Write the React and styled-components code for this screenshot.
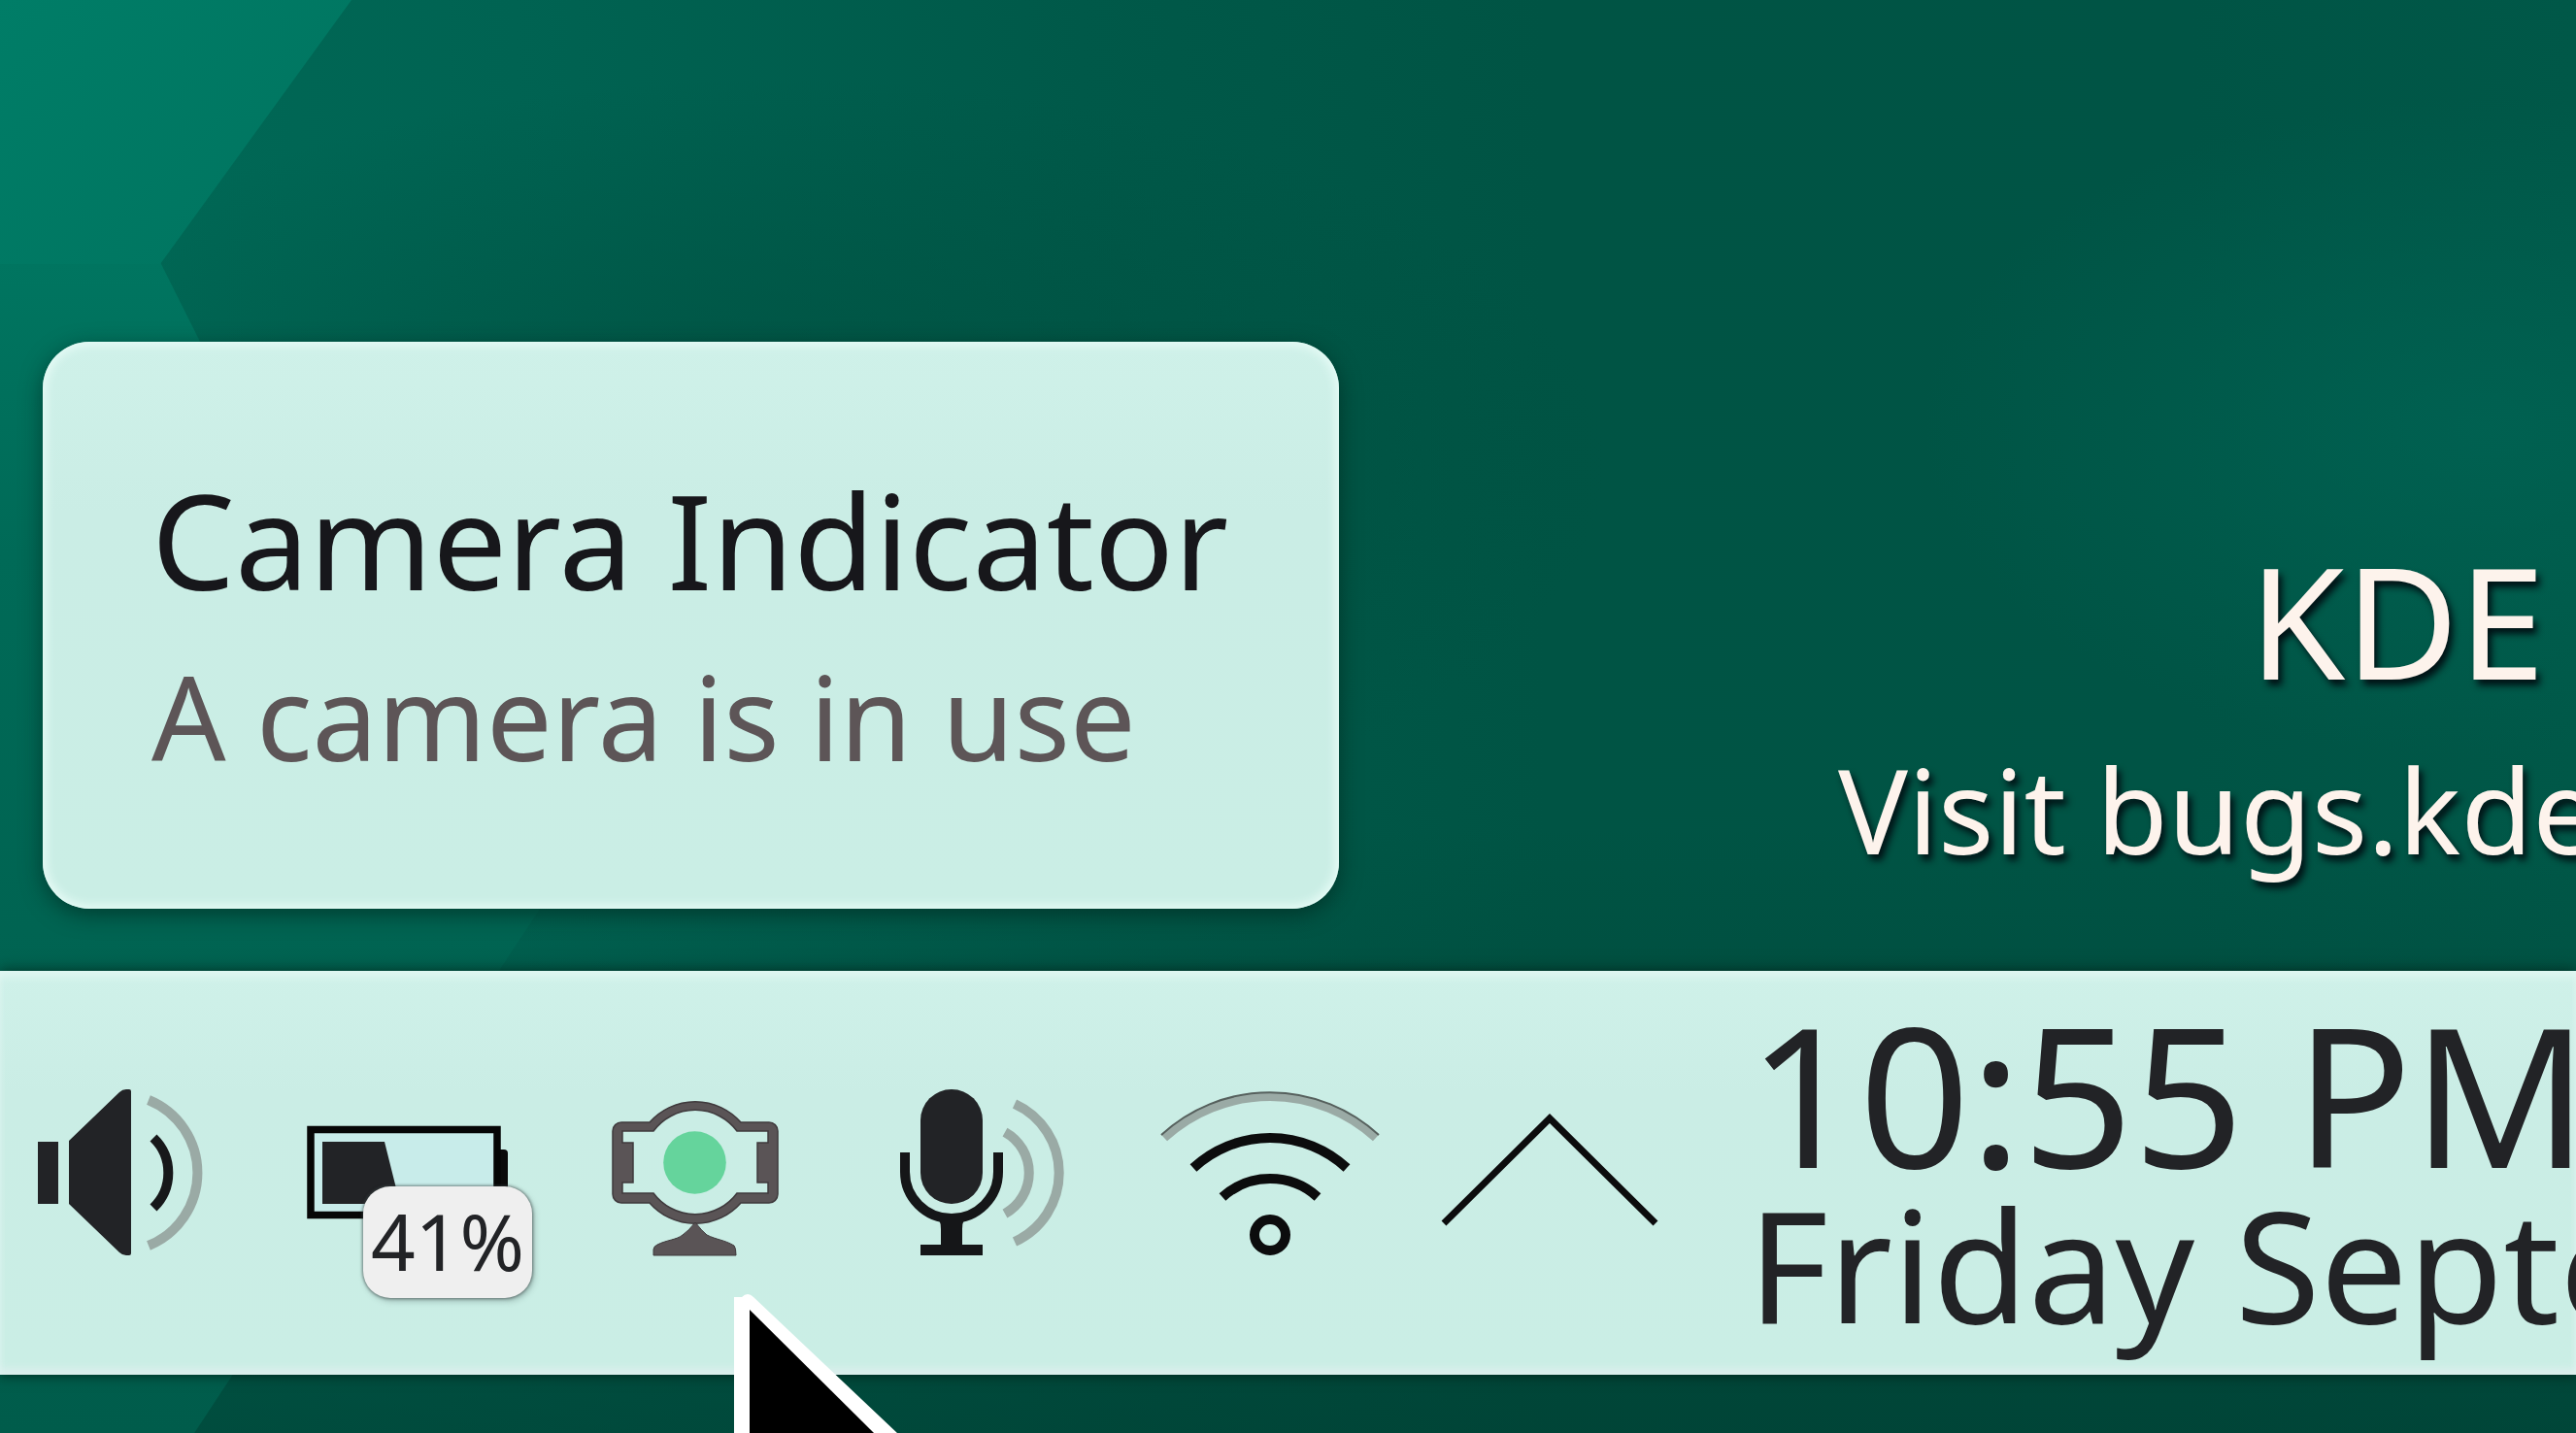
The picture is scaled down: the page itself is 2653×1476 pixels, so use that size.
import React from "react";
import styled, { createGlobalStyle, css } from "styled-components";

const ink = "#222326";

const GlobalStyle = createGlobalStyle`
  *, *::before, *::after { box-sizing: border-box; }
  html, body { margin: 0; padding: 0; overflow: hidden; background: #005545; }
  body { font-family: "Noto Sans", "Open Sans", sans-serif; color: ${ink}; }
  p, h1, h2 { margin: 0; font-weight: 400; }
`;

const Desktop = styled.main`
  position: relative;
  isolation: isolate;
  display: flex;
  flex-direction: column;
  justify-content: flex-end;
  gap: 64px;
  min-height: 100vh;
  padding-bottom: 60px;
  overflow: hidden;
`;

const Wallpaper = styled.svg`
  position: absolute;
  inset: 0;
  z-index: -1;
  width: 100%;
  height: 100%;
`;

const DesktopArea = styled.div`
  display: flex;
  align-items: flex-end;
  justify-content: space-between;
  padding-left: 44px;
`;

const glass = css`
  background: linear-gradient(#cff1e9, #caede5 30%, #caeee5);
`;

const Tooltip = styled.section`
  ${glass}
  display: flex;
  flex-direction: column;
  gap: 20px;
  padding: 122px 114px 118px 112px;
  border-radius: 48px;
  box-shadow: inset 0 0 10px 4px #e6fbf6, 0 6px 22px rgba(0, 30, 22, 0.55);
  white-space: nowrap;
`;

const TooltipTitle = styled.h1`
  font-size: 136px;
  line-height: 164px;
  color: #17171b;
`;

const TooltipText = styled.p`
  font-size: 120px;
  line-height: 160px;
  color: #5d5557;
`;

const Watermark = styled.section`
  display: flex;
  flex-direction: column;
  gap: 26px;
  width: 760px;
  padding-bottom: 22px;
  color: #fdf3ec;
  text-shadow: 4px 6px 7px rgba(0, 10, 16, 0.9);
  white-space: nowrap;
`;

const WatermarkTitle = styled.h2`
  padding-right: 32px;
  font-size: 160px;
  line-height: 180px;
  text-align: right;
`;

const WatermarkText = styled.p`
  font-size: 120px;
  line-height: 160px;
`;

const Panel = styled.footer`
  ${glass}
  display: flex;
  align-items: center;
  gap: 56px;
  padding: 26px 0 40px 4px;
  box-shadow: inset 0 8px 8px -2px #e0f7f2, inset 0 -8px 8px -2px #deefee,
    0 -2px 14px rgba(0, 30, 22, 0.5), 0 2px 8px rgba(0, 30, 22, 0.4);
`;

const Tray = styled.div`
  display: flex;
  gap: 56px;
  padding-top: 14px;
`;

const TrayButton = styled.button`
  position: relative;
  flex: none;
  display: block;
  width: ${(p) => p.$width || 240}px;
  height: 240px;
  padding: 0;
  border: 0;
  background: none;
  color: inherit;
  font: inherit;
`;

const Icon = styled.svg`
  display: block;
  width: 100%;
  height: 100%;
  fill: none;
  overflow: visible;
`;

const Badge = styled.span`
  position: absolute;
  left: 74px;
  top: 134px;
  width: 174px;
  padding-bottom: 3px;
  border-radius: 28px;
  background: #efefef;
  box-shadow: 0 0 3px 1px rgba(60, 70, 70, 0.6), 2px 3px 6px rgba(60, 80, 80, 0.35);
  font-size: 80px;
  line-height: 112px;
  text-align: center;
`;

const Clock = styled.time`
  display: flex;
  flex-direction: column;
  flex: 1;
  min-width: 0;
  padding-left: 36px;
  white-space: nowrap;
`;

const ClockTime = styled.span`
  font-size: 200px;
  line-height: 200px;
`;

const ClockDate = styled.span`
  font-size: 160px;
  line-height: 150px;
`;

const Pointer = styled.svg`
  position: absolute;
  left: 756px;
  bottom: 0;
  width: 170px;
  height: 144px;
`;

const faded = "#9aaaa5";

const VolumeIcon = () => (
  <Icon viewBox="0 0 240 240" aria-hidden="true">
    <path d="M35 88H56V152H35Z" fill={ink} />
    <path d="M67 87L119 37Q122 34 126 34H129Q131 34 131 36V203Q131 205 129 205H126Q122 205 119 202L67 152Z" fill={ink} />
    <path d="M154 84A50 50 0 0 1 154 156" stroke="#17181a" strokeWidth="10" />
    <path d="M149 45A81 81 0 0 1 149 195" stroke={faded} strokeWidth="10" />
  </Icon>
);

const BatteryIcon = () => (
  <Icon viewBox="0 0 240 240" aria-hidden="true">
    <path d="M215 96H219Q223 96 223 100V143H215Z" fill="#0a0a0a" />
    <rect x="20" y="75.500" width="192" height="88" stroke="#060606" strokeWidth="7.500" fill="#c8ecea" />
    <path d="M32 88H96L112 152H32Z" fill={ink} />
  </Icon>
);

const CameraIcon = () => (
  <Icon viewBox="0 0 240 240" aria-hidden="true">
    <path
      fill="#5a5456"
      stroke="#3f3a3d"
      strokeWidth="1.500"
      fillRule="evenodd"
      d="M44 68H73A62.500 62.500 0 0 1 167 68H196A9 9 0 0 1 205 77V142A9 9 0 0 1 196 151H167A62.500 62.500 0 0 1 73 151H44A9 9 0 0 1 35 142V77A9 9 0 0 1 44 68Z
         M45 77V89H56V130H45V141H77A53.500 53.500 0 0 0 163 141H195V130H184V89H195V77H163A53.500 53.500 0 0 0 77 77Z"
    />
    <circle cx="119.500" cy="109.500" r="32.300" fill="#65d49c" />
    <path d="M120 171Q127 180 132 184C142 189 150 189 160 195Q162 197 162 205H77V199Q77 196 81 194C91 189 101 189 107 184Q113 180 120 171Z" fill="#5a5456" stroke="#3f3a3d" strokeWidth="1" />
  </Icon>
);

const MicrophoneIcon = () => (
  <Icon viewBox="0 0 240 240" aria-hidden="true">
    <rect x="56" y="34" width="64" height="118" rx="32" fill={ink} />
    <path d="M40 99V119A48 48 0 0 0 136 119V99" stroke="#151618" strokeWidth="10" />
    <path d="M75 168H101Q99 172 99 178V194H120V205H56V194H77V178Q77 172 75 168Z" fill="#151618" />
    <path d="M143 78A48 48 0 0 1 143 162M153 49A78 78 0 0 1 153 191" stroke={faded} strokeWidth="10" />
  </Icon>
);

const WifiIcon = () => (
  <Icon viewBox="0 0 240 240" aria-hidden="true">
    <path d="M11 84A161 161 0 0 1 229 84" stroke={faded} strokeWidth="9" />
    <path d="M8 81A165 165 0 0 1 232 81" stroke="#56605d" strokeWidth="2" />
    <path d="M41 115A116 116 0 0 1 199 115M71 145A73 73 0 0 1 169 145" stroke="#0c0c0d" strokeWidth="10" />
    <circle cx="120" cy="184" r="16" stroke="#0c0c0d" strokeWidth="10" />
  </Icon>
);

const ExpandIcon = () => (
  <Icon viewBox="0 0 224 240" aria-hidden="true">
    <path d="M3 172L112 64L221 172" stroke="#0c0c0d" strokeWidth="7" />
  </Icon>
);

const Backdrop = () => (
  <Wallpaper viewBox="0 0 2653 1476" preserveAspectRatio="none" aria-hidden="true">
    <defs>
      <linearGradient id="base" x1="0" y1="0" x2="1" y2="0">
        <stop offset="0" stopColor="#006a57" />
        <stop offset="0.2" stopColor="#006352" />
        <stop offset="0.42" stopColor="#005949" />
        <stop offset="0.6" stopColor="#005444" />
        <stop offset="0.85" stopColor="#005445" />
        <stop offset="1" stopColor="#005848" />
      </linearGradient>
      <radialGradient id="shade">
        <stop offset="0" stopColor="#004c3c" stopOpacity="0.65" />
        <stop offset="1" stopColor="#004c3c" stopOpacity="0" />
      </radialGradient>
      <linearGradient id="facet" gradientUnits="userSpaceOnUse" x1="0" y1="0" x2="260" y2="270">
        <stop offset="0" stopColor="#007d67" />
        <stop offset="1" stopColor="#007560" />
      </linearGradient>
      <linearGradient id="side" x1="0" y1="0" x2="0" y2="1">
        <stop offset="0" stopColor="#007560" />
        <stop offset="0.25" stopColor="#006a57" />
        <stop offset="1" stopColor="#005c4b" />
      </linearGradient>
      <linearGradient id="floor" x1="0" y1="0" x2="0" y2="1">
        <stop offset="0" stopColor="#003a2e" stopOpacity="0" />
        <stop offset="1" stopColor="#003a2e" stopOpacity="0.6" />
      </linearGradient>
      <radialGradient id="glow">
        <stop offset="0" stopColor="#006454" stopOpacity="0.75" />
        <stop offset="1" stopColor="#006454" stopOpacity="0" />
      </radialGradient>
    </defs>
    <rect width="2653" height="1476" fill="url(#base)" />
    <ellipse cx="800" cy="480" rx="860" ry="400" fill="url(#shade)" />
    <ellipse cx="2560" cy="440" rx="580" ry="340" fill="url(#glow)" />
    <path d="M0 270H165L340 620L560 930L200 1476H0Z" fill="url(#side)" />
    <path d="M0 0H362L165 272H0Z" fill="url(#facet)" />
    <path d="M560 930L800 850H2653V1476H200Z" fill="url(#floor)" />
  </Wallpaper>
);

export default function App() {
  return (
    <>
      <GlobalStyle />
      <Desktop>
        <Backdrop />
        <DesktopArea>
          <Tooltip role="tooltip">
            <TooltipTitle>Camera Indicator</TooltipTitle>
            <TooltipText>A camera is in use</TooltipText>
          </Tooltip>
          <Watermark>
            <WatermarkTitle>KDE</WatermarkTitle>
            <WatermarkText>Visit bugs.kde</WatermarkText>
          </Watermark>
        </DesktopArea>
        <Panel>
          <Tray>
            <TrayButton aria-label="Volume"><VolumeIcon /></TrayButton>
            <TrayButton aria-label="Battery">
              <BatteryIcon />
              <Badge>41%</Badge>
            </TrayButton>
            <TrayButton aria-label="Camera"><CameraIcon /></TrayButton>
            <TrayButton aria-label="Microphone"><MicrophoneIcon /></TrayButton>
            <TrayButton aria-label="Network"><WifiIcon /></TrayButton>
            <TrayButton aria-label="Show hidden icons" $width={224}><ExpandIcon /></TrayButton>
          </Tray>
          <Clock>
            <ClockTime>10:55 PM</ClockTime>
            <ClockDate>Friday Septe</ClockDate>
          </Clock>
        </Panel>
        <Pointer viewBox="0 0 170 144" aria-hidden="true">
          <path d="M0 144V4H8Q14 -2 20 4L168 144Z" fill="#fff" />
          <path d="M16 144V17L144 144Z" fill="#000" />
        </Pointer>
      </Desktop>
    </>
  );
}
